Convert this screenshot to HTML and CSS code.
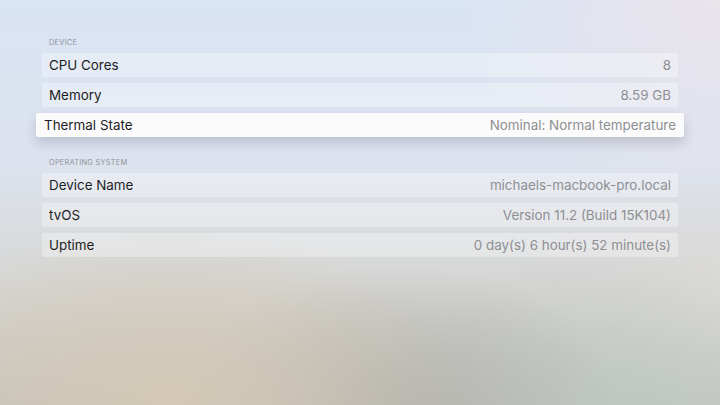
FILE: index.html
```html
<!DOCTYPE html>
<html>
<head>
<meta charset="utf-8">
<link rel="stylesheet" href="styles.css">
</head>
<body>
<div class="screen">
  <div class="list">
    <div class="section-title">DEVICE</div>
    <div class="rows">
      <div class="row"><span class="label">CPU Cores</span><span class="value">8</span></div>
      <div class="row"><span class="label">Memory</span><span class="value">8.59 GB</span></div>
      <div class="row focused"><span class="label">Thermal State</span><span class="value">Nominal: Normal temperature</span></div>
    </div>
    <div class="section-title second">OPERATING SYSTEM</div>
    <div class="rows">
      <div class="row"><span class="label">Device Name</span><span class="value">michaels-macbook-pro.local</span></div>
      <div class="row"><span class="label">tvOS</span><span class="value">Version 11.2 (Build 15K104)</span></div>
      <div class="row"><span class="label">Uptime</span><span class="value">0 day(s) 6 hour(s) 52 minute(s)</span></div>
    </div>
  </div>
</div>
</body>
</html>
```
FILE: styles.css
```css
html, body {
  margin: 0;
  padding: 0;
}
body {
  width: 720px;
  height: 405px;
  overflow: hidden;
  font-family: Inter, "Liberation Sans", sans-serif;
}
.screen {
  width: 720px;
  height: 405px;
  box-sizing: border-box;
  padding: 38px 42px 0 42px;
  background:
    radial-gradient(ellipse 260px 200px at 720px 0px, rgba(236,228,234,0.9), rgba(236,228,234,0)),
    radial-gradient(ellipse 300px 180px at 170px 405px, rgba(212,200,180,0.95), rgba(212,200,180,0)),
    radial-gradient(ellipse 220px 140px at 400px 405px, rgba(178,178,174,0.9), rgba(178,178,174,0)),
    radial-gradient(ellipse 260px 160px at 620px 405px, rgba(190,200,195,0.9), rgba(190,200,195,0)),
    radial-gradient(ellipse 200px 120px at 720px 300px, rgba(224,220,218,0.8), rgba(224,220,218,0)),
    linear-gradient(180deg, #d9e4f4 0%, #dde3ee 40%, #d6d6d4 70%, #c6c4bc 100%);
}
.list {
  width: 636px;
}
.section-title {
  font-size: 7.4px;
  line-height: 10px;
  height: 10px;
  letter-spacing: 0.25px;
  color: #8f939b;
  padding-left: 7px;
  margin-bottom: 5px;
}
.section-title.second {
  margin-top: 21px;
}
.rows {
  display: flex;
  flex-direction: column;
  gap: 6px;
}
.row {
  height: 24px;
  display: flex;
  align-items: center;
  justify-content: space-between;
  padding: 0 7px;
  background: rgba(255,255,255,0.32);
  border-radius: 2px;
  font-size: 13.4px;
}
.label {
  color: #1d1d1f;
}
.value {
  color: #8e8f93;
}
.row.focused {
  margin: 0 -6px;
  padding: 0 8px;
  background: #fbfbfb;
  box-shadow: 0 6px 12px rgba(40,40,60,0.18);
}
```
